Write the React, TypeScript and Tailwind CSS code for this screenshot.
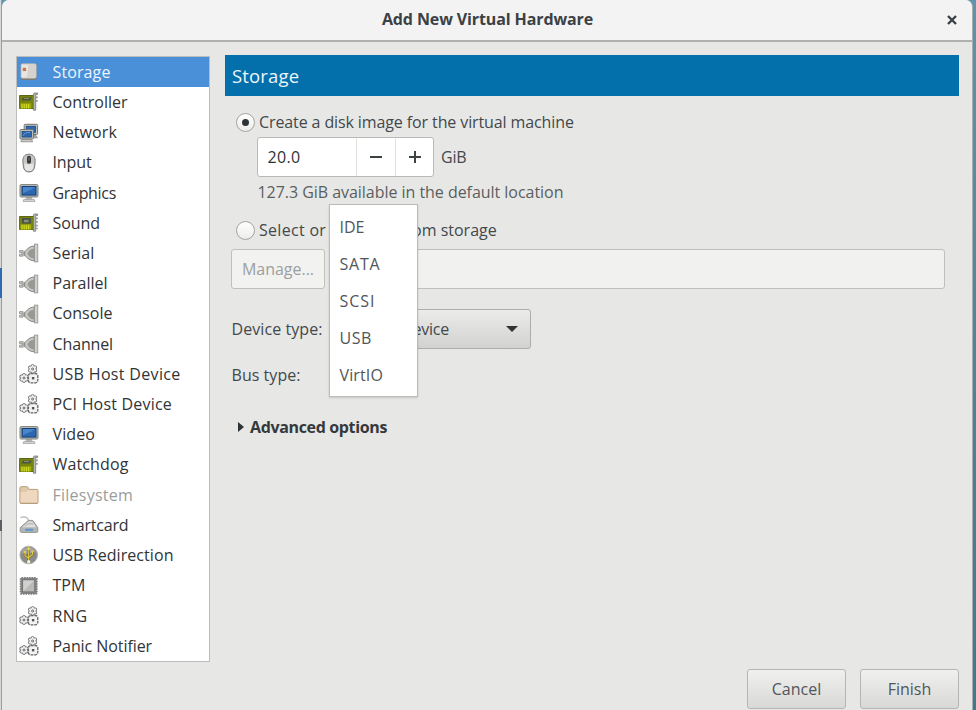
import React from "react";

type IconName = "disk" | "card" | "sound" | "network" | "mouse" | "monitor" | "plug" | "gears" | "folder" | "reader" | "usb" | "chip";

const teeth = [0, 60, 120, 180, 240, 300];

function Gear({ x, y }: { x: number; y: number }) {
  return (
    <g transform={`translate(${x} ${y})`}>
      {teeth.map((a) => (
        <circle key={a} cy="-2.9" r="1.6" fill="#f4f4f4" stroke="#707070" strokeWidth="0.9" transform={`rotate(${a})`} />
      ))}
      <circle r="2.9" fill="#f1f1f1" />
      <circle r="1" fill="#fff" stroke="#555" strokeWidth="0.9" />
    </g>
  );
}

function Icon({ name }: { name: IconName }) {
  return (
    <svg width="20" height="20" viewBox="0 0 20 20" className="shrink-0">
      {name === "disk" && (
        <>
          <rect x="2" y="2" width="15.4" height="16" rx="1.4" fill="#7d7975" />
          <rect x="2" y="1.8" width="15.2" height="14.4" rx="1.4" fill="#e8e5e2" stroke="#b3aea8" strokeWidth="0.8" />
          <path d="M9.5 2.4h6.2c.8 0 1.2.4 1.2 1.2v11.8H8z" fill="#d6d2ce" />
          <rect x="3.8" y="5.8" width="3.3" height="3.3" fill="#d2723c" />
        </>
      )}
      {(name === "card" || name === "sound") && (
        <>
          <path d="M.6 3.5h14.6v13H.6z" fill="#78840b" stroke="#515b0c" strokeWidth="0.9" />
          {name === "card" ? (
            <>
              <path d="M4 5.6h9l-1.8 3H2.4z" fill="#4c5742" />
              <path d="M5 6.5h5" stroke="#8e9688" strokeWidth="0.8" />
            </>
          ) : (
            <>
              <rect x="3" y="5" width="9" height="5.6" fill="#4d5544" />
              <rect x="5" y="6.8" width="4.6" height="2.4" fill="#899080" />
            </>
          )}
          <path d="M1.6 11.3h10.6v5.2H1.6z" fill="#a0ab10" />
          <path d="M3 12v4.5M5.2 12v4.5M7.4 12v4.5M9.6 12v4.5" stroke="#d0db25" strokeWidth="1" />
          <path d="M14.4 18.2V2.2c0-.8.6-1.2 1.5-1.2H18.6v1.5h-1.9v15.7z" fill="#b5b5b2" stroke="#777" strokeWidth="0.8" />
          <path d="M17 4.4h1.8v1.8H17zM17 8h1.8v1.8H17z" fill="#9a9a97" />
          {name === "sound" && <path d="M17 11.7h1.8v1.8H17zM17 14.8h1.8v1.4H17z" fill="#9a9a97" />}
        </>
      )}
      {name === "network" && (
        <>
          <rect x="5.2" y="1.3" width="13.4" height="10.2" rx="1" fill="#c4c6c2" stroke="#6f726d" />
          <rect x="7.2" y="3.2" width="9.4" height="6.4" fill="#2f67ad" stroke="#173f72" strokeWidth="0.7" />
          <path d="M13 12h3.5l2 2.8H14z" fill="#aaa" stroke="#777" strokeWidth="0.6" />
          <rect x="1" y="6.6" width="13.4" height="9.4" rx="1" fill="#c4c6c2" stroke="#6f726d" />
          <rect x="3" y="8.5" width="9.4" height="5.6" fill="#2d66ad" stroke="#173f72" strokeWidth="0.7" />
          <path d="M4 12.8C5 10 8 9.2 11.3 9.3" stroke="#6598d6" fill="none" />
          <path d="M2.8 16.5h9.8l1 2.3H1.8z" fill="#c9c9c6" stroke="#7d7d7a" strokeWidth="0.7" />
        </>
      )}
      {name === "mouse" && (
        <>
          <path d="M3.9 9.2C3.6 4 5.5 1.2 10 1.2S16.4 4 16.1 9.2l-.4 4C15.3 17 13.3 19 10 19s-5.3-2-5.7-5.8z" fill="#c6c6c3" stroke="#777" />
          <path d="M5.4 10c1.2 1.8 8 1.8 9.2 0l-.2 3.8C14 16.7 12.5 18 10 18s-4-1.3-4.4-4.2z" fill="#e6e6e4" />
          <rect x="8" y="2.8" width="4" height="8" rx="2" fill="#34383a" />
          <path d="M10 4.5v3.2" stroke="#777" />
        </>
      )}
      {name === "monitor" && (
        <>
          <path d="M7.2 14h5.6l.6 2.7H6.6z" fill="#b8b9b6" />
          <path d="M4.8 16.4h10.4l.8 2H4z" fill="#d8d8d5" stroke="#969793" strokeWidth="0.7" />
          <rect x="1" y="1.6" width="18" height="12.4" rx="1.2" fill="#b9bdbb" stroke="#7d817d" />
          <rect x="3" y="3.5" width="14" height="8.6" fill="#2b68b1" stroke="#173f75" />
          <path d="M4 10.6C6 8 10 9 16 4H4z" fill="#4a86ca" />
        </>
      )}
      {name === "plug" && (
        <>
          <path d="M.5 7.6h3.6v2H.5zM.5 11.2h3.6v2H.5z" fill="#c6c6c3" stroke="#858582" strokeWidth="0.7" />
          <path d="M2.4 8.8h4.4v3.6H2.4z" fill="#a9a9a6" />
          <path d="M5.7 8.2C8 7.4 9 3.4 15.2 3v14.8C9 17.4 8 13.6 5.7 12.8z" fill="#c6c6c3" stroke="#858582" />
          <path d="M8.4 10.5c1.3-3.2 3-4.6 6.6-4.8v9.6c-3.6-.2-5.3-1.6-6.6-4.8z" fill="#989895" />
          <rect x="15.4" y="1.1" width="3.4" height="17.8" fill="#cfcfcc" stroke="#92928f" strokeWidth="0.8" />
        </>
      )}
      {name === "gears" && (
        <>
          <Gear x={13.6} y={5} />
          <Gear x={5} y={14} />
          <g transform="translate(14.1 14.2)">
            <rect x="-4.7" y="-4.7" width="9.4" height="9.4" rx="2.4" fill="#f3f3f3" stroke="#666" strokeWidth="1.3" strokeDasharray="2.8 0.8" />
            <rect x="-1.2" y="-1.2" width="2.4" height="2.4" fill="#555" />
          </g>
        </>
      )}
      {name === "folder" && (
        <>
          <path d="M.9 17.4V3c0-.8.5-1.3 1.2-1.3H8c.8 0 1 .5 1.4 1.5l.5 1.2H18c.7 0 1 .4 1 1v12c0 .7-.4 1.1-1 1.1H2c-.7 0-1.1-.4-1.1-1.1z" fill="#e0c8ab" stroke="#b89d7b" />
          <path d="M1.6 17V8c0-.6.3-.9.9-.9h4.700L9.300 5h9v12z" fill="#efd8c0" />
        </>
      )}
      {name === "reader" && (
        <>
          <path d="M1.5 2.600C5 1.200 9 2 9.500 5.600" fill="none" stroke="#b5b5b5" strokeWidth="1.300" />
          <path d="m1.200 12.600 8.200-7.200h4.400l5 7.200v3.600c0 .8-.5 1.200-1.400 1.200H2.700c-.9 0-1.500-.4-1.500-1.200z" fill="#b3b6b4" stroke="#8b8e8b" strokeWidth="0.9" />
          <path d="m3 12.200 6.800-5.600h3.400l3.900 5.600z" fill="#dfe0de" />
          <path d="M6 11.300c1.800-2.600 5-3.200 8-2" fill="none" stroke="#aaa" />
          <rect x="6" y="13.800" width="8.400" height="2" rx="1" fill="#5b93cd" />
        </>
      )}
      {name === "usb" && (
        <>
          <circle cx="9.700" cy="10" r="8.800" fill="#8b8b88" stroke="#b1b1af" />
          <path d="M3 6a8 8 0 0 1 13.400 0c-3 3-9 4-13.400 2z" fill="#a5a5a3" />
          <path d="M9.700 17V4M6 7.500v3.200l3.700 2.600M13.400 7v2.700l-3.700 2.600" fill="none" stroke="#6b6432" strokeWidth="2.200" />
          <path d="M9.700 17V4M6 7.500v3.200l3.700 2.600M13.400 7v2.700l-3.700 2.600" fill="none" stroke="#e6cc45" strokeWidth="1.100" />
          <path d="m9.700 1.600 1.800 3.200H7.900z" fill="#f1d541" />
          <rect x="5" y="6" width="2" height="2.200" fill="#e6cc45" />
          <rect x="12.400" y="5.600" width="2" height="2.200" fill="#e6cc45" />
          <circle cx="9.700" cy="16.800" r="1.700" fill="#f7f0d0" />
        </>
      )}
      {name === "chip" && (
        <>
          <rect x="1.600" y="1.800" width="16.200" height="16.200" rx="1" fill="#8b8b8b" stroke="#7a7a7a" strokeWidth="1.700" strokeDasharray="1.500 1" />
          <rect x="3" y="3.200" width="13.400" height="13.400" rx="1" fill="#747474" />
          <rect x="4.200" y="4.400" width="11" height="11" fill="#b9b9b8" />
          <path d="M4.200 4.400h11L4.200 15.400z" fill="#d0d0cf" />
        </>
      )}
    </svg>
  );
}

const hardware: { label: string; icon: IconName; tracking: string; state?: "selected" | "disabled" }[] = [
  { label: "Storage", icon: "disk", tracking: "tracking-[0.11px]", state: "selected" },
  { label: "Controller", icon: "card", tracking: "tracking-normal" },
  { label: "Network", icon: "network", tracking: "tracking-[0.11px]" },
  { label: "Input", icon: "mouse", tracking: "tracking-[-0.1px]" },
  { label: "Graphics", icon: "monitor", tracking: "tracking-[-0.31px]" },
  { label: "Sound", icon: "sound", tracking: "tracking-[-0.06px]" },
  { label: "Serial", icon: "plug", tracking: "tracking-[0.12px]" },
  { label: "Parallel", icon: "plug", tracking: "tracking-normal" },
  { label: "Console", icon: "plug", tracking: "tracking-[0.03px]" },
  { label: "Channel", icon: "plug", tracking: "tracking-[-0.13px]" },
  { label: "USB Host Device", icon: "gears", tracking: "tracking-[0.33px]" },
  { label: "PCI Host Device", icon: "gears", tracking: "tracking-[0.2px]" },
  { label: "Video", icon: "monitor", tracking: "tracking-[0.1px]" },
  { label: "Watchdog", icon: "card", tracking: "tracking-[0.13px]" },
  { label: "Filesystem", icon: "folder", tracking: "tracking-[0.24px]", state: "disabled" },
  { label: "Smartcard", icon: "reader", tracking: "tracking-[-0.18px]" },
  { label: "USB Redirection", icon: "usb", tracking: "tracking-[0.07px]" },
  { label: "TPM", icon: "chip", tracking: "tracking-[0.06px]" },
  { label: "RNG", icon: "gears", tracking: "tracking-[0.48px]" },
  { label: "Panic Notifier", icon: "gears", tracking: "tracking-[-0.07px]" },
];

const buses = [
  { label: "IDE", tracking: "tracking-normal" },
  { label: "SATA", tracking: "tracking-[0.79px]" },
  { label: "SCSI", tracking: "tracking-[0.98px]" },
  { label: "USB", tracking: "tracking-[0.5px]" },
  { label: "VirtIO", tracking: "tracking-[0.13px]" },
];

function Radio({ checked }: { checked?: boolean }) {
  return (
    <span className="flex h-[19px] w-[19px] shrink-0 items-center justify-center rounded-full border border-[#a3a3a0] bg-linear-to-b from-white to-[#ececeb]">
      {checked && <span className="h-[7px] w-[7px] rounded-full bg-[#2e3436]" />}
    </span>
  );
}

function HardwareList() {
  return (
    <ul className="mt-px flex h-[606px] w-[194px] shrink-0 flex-col border border-[#bdbdbb] bg-white">
      {hardware.map(({ label, icon, tracking, state }) => (
        <li
          key={label}
          className={`flex flex-1 items-center gap-[13.5px] pl-[2px] ${
            state === "selected" ? "bg-[#4a90d9] text-[#eef4fb]" : state === "disabled" ? "text-[#9b9d9c]" : "text-[#303436]"
          }`}
        >
          <Icon name={icon} />
          <span className={`pb-[0.5px] leading-5 ${tracking}`}>{label}</span>
        </li>
      ))}
    </ul>
  );
}

function BusMenu() {
  return (
    <ul className="absolute top-[-161px] left-[98px] flex h-[193px] w-[89px] flex-col border border-[#bbbbb8] bg-white pt-[3px] pb-[2px] shadow-[0_1px_2px_rgba(0,0,0,0.15)]">
      {buses.map(({ label, tracking }) => (
        <li key={label} className={`flex flex-1 items-center pl-[9.5px] text-[#50565a] ${tracking}`}>
          {label}
        </li>
      ))}
    </ul>
  );
}

function StoragePanel() {
  return (
    <section className="ml-[15px] flex w-[734px] flex-col text-[#43494b]">
      <h2 className="flex h-[41px] items-center bg-[#036fab] pl-[7px] text-[18.5px] tracking-[0.15px] text-[#edf5fa]">Storage</h2>
      <div className="flex flex-col pr-[14px] pl-[6px]">
        <label className="mt-[16px] flex h-5 items-center gap-1 pl-[5px] tracking-[-0.11px]">
          <Radio checked />
          Create a disk image for the virtual machine
        </label>
        <div className="mt-[5px] flex h-10 items-center pl-[26px]">
          <div className="flex h-10 w-[177px] rounded-[3px] border border-[#b9b9b6] bg-white text-[#2e3436]">
            <span className="flex w-[98px] items-center pl-[9.5px] tracking-[0.34px]">20.0</span>
            <span className="flex w-[39px] items-center justify-center border-l border-[#e2e2e0]">
              <span className="h-[2px] w-3 bg-[#3d4244]" />
            </span>
            <span className="flex flex-1 items-center justify-center border-l border-[#e2e2e0]">
              <svg width="12" height="12" viewBox="0 0 12 12">
                <path d="M6 0v12M0 6h12" stroke="#3d4244" strokeWidth="2" />
              </svg>
            </span>
          </div>
          <span className="pl-[7px] tracking-[-0.17px]">GiB</span>
        </div>
        <p className="mt-[5px] h-5 pl-[26.5px] leading-5 tracking-[-0.04px] text-[#5a5f60]">127.3 GiB available in the default location</p>
        <label className="mt-[18px] flex h-5 items-center gap-1 pl-[5px]">
          <Radio />
          <span className="whitespace-pre">
            <span className="tracking-[0.3px]">Select or</span>
            <span> create custom storage</span>
          </span>
        </label>
        <div className="mt-[9px] flex h-10 gap-[6px]">
          <button className="w-[94px] rounded-[3px] border border-[#bfbfbc] bg-[#f2f2f1] pb-px tracking-[-0.03px] text-[#9c9f9f]">Manage...</button>
          <div className="flex-1 rounded-[3px] border border-[#bfbfbc] bg-[#f1f1f0]" />
        </div>
        <div className="mt-5 flex h-10 items-center">
          <span className="w-[98px] pl-[0.5px] tracking-[0.07px]">Device type:</span>
          <div className="flex h-10 w-[202px] items-center justify-between rounded-[3px] border border-[#adadaa] bg-linear-to-b from-[#ebebea] to-[#d2d2d0] pr-3 pl-[34px]">
            <span className="w-[85px] text-right tracking-[-0.25px] whitespace-nowrap">Disk device</span>
            <span className="h-0 w-0 border-x-[6px] border-t-[6px] border-x-transparent border-t-[#2e3436]" />
          </div>
        </div>
        <div className="relative mt-[16px] flex h-5 items-center">
          <span className="pl-[0.5px] tracking-[0.04px]">Bus type:</span>
          <BusMenu />
        </div>
        <div className="mt-[32px] flex h-5 items-center gap-[6px] pl-[7px] font-bold tracking-[-0.35px] text-[#34393b]">
          <span className="h-0 w-0 border-y-[5px] border-l-[6px] border-y-transparent border-l-[#2e3436]" />
          Advanced options
        </div>
      </div>
    </section>
  );
}

const actionClass = "h-10 w-[99px] rounded-[3px] border border-[#b5b5b2] bg-linear-to-b from-[#f0f0ef] to-[#d8d8d6] text-[#50565a]";

export default function App() {
  return (
    <div className="flex h-[710px] w-[976px] overflow-hidden bg-[#d7d8d9] font-['Open_Sans','Noto_Sans',sans-serif] text-[16px] leading-5">
      <div className="flex w-[2px] shrink-0 flex-col border-r border-[#9b9c9d]">
        <div className="mt-[268px] h-[30px] w-[2px] bg-[#2d6cb4]" />
        <div className="mt-[222px] h-[11px] w-[2px] bg-[#5c5f61]" />
      </div>
      <div className="flex flex-1 bg-linear-to-b from-[#5e94ae] via-[#4b8796] to-[#3a7c8c]">
        <div className="flex w-[971px] flex-col rounded-t-[7px] border-r border-[#a7adad] bg-[#e7e7e6]">
          <header className="flex h-[42px] shrink-0 items-center rounded-t-[7px] border-b-2 border-[#b0b0ae] bg-[#f3f3f3] pr-[15px]">
            <h1 className="flex-1 pb-[2px] pl-[26px] text-center font-bold tracking-[-0.11px] text-[#3b4144]">Add New Virtual Hardware</h1>
            <svg width="10" height="10" viewBox="0 0 10 10">
              <path d="m1 1 8 8M9 1 1 9" stroke="#3b4144" strokeWidth="2.4" />
            </svg>
          </header>
          <main className="flex pt-[13px] pl-[14px]">
            <HardwareList />
            <StoragePanel />
          </main>
          <footer className="mt-[7px] flex justify-end gap-[14px] pr-[13px]">
            <button className={actionClass}>Cancel</button>
            <button className={actionClass}>Finish</button>
          </footer>
        </div>
      </div>
    </div>
  );
}
